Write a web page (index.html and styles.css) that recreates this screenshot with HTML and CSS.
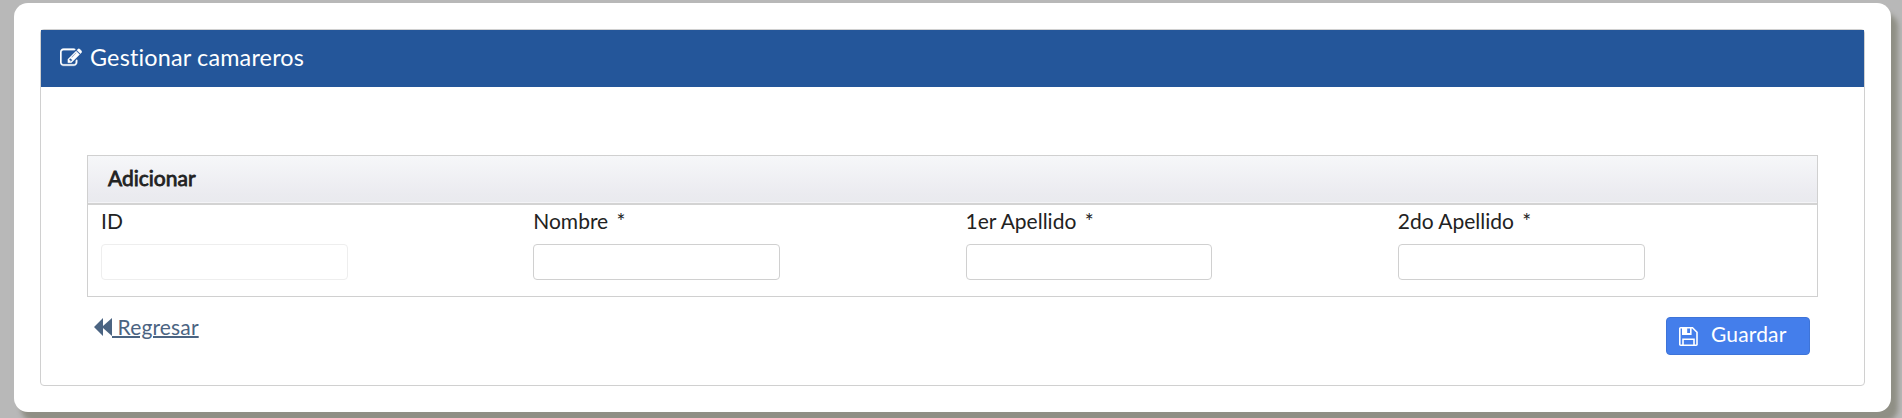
FILE: index.html
```html
<!DOCTYPE html>
<html lang="es">
<head>
<meta charset="utf-8">
<title>Gestionar camareros</title>
<link rel="stylesheet" href="styles.css">
</head>
<body>
<main class="card">
  <section class="panel">
    <h1 class="panel-title">
      <svg class="icon-edit" viewBox="0 0 1792 1792" fill="currentColor"><path d="M888 1184l116-116-152-152-116 116v56h96v96h56zm440-720q-16-16-33 1l-350 350q-17 17-1 33t33-1l350-350q17-17 1-33zm80 594v190q0 119-84.5 203.5t-203.5 84.5h-832q-119 0-203.5-84.5t-84.5-203.5v-832q0-119 84.5-203.5t203.5-84.5h832q63 0 117 25 15 7 18 23 3 17-9 29l-49 49q-14 14-32 8-23-6-45-6h-832q-66 0-113 47t-47 113v832q0 66 47 113t113 47h832q66 0 113-47t47-113v-126q0-13 9-22l64-64q15-15 35-7t20 29zm-96-738l288 288-672 672h-288v-288zm444 132l-92 92-288-288 92-92q28-28 68-28t68 28l152 152q28 28 28 68t-28 68z"/></svg>
      <span class="panel-name">Gestionar camareros</span>
    </h1>
    <div class="panel-body">
      <form class="fieldset">
        <h2 class="fieldset-title">Adicionar</h2>
        <div class="fields">
          <div class="field"><label class="label" for="id">ID</label><input class="input" id="id" disabled></div>
          <div class="field"><label class="label" for="nombre">Nombre <span class="required">*</span></label><input class="input" id="nombre"></div>
          <div class="field"><label class="label" for="ap1">1er Apellido <span class="required">*</span></label><input class="input" id="ap1"></div>
          <div class="field"><label class="label" for="ap2">2do Apellido <span class="required">*</span></label><input class="input" id="ap2"></div>
        </div>
      </form>
      <div class="actions">
        <a class="back" href="#"><svg class="icon-back" viewBox="0 0 18 18" fill="currentColor"><path d="M0 9L9 0V8L18 0V18L9 10V18Z"/></svg><span class="back-text">&nbsp;Regresar</span></a>
        <button class="save" type="button">
          <svg class="icon-save" viewBox="0 0 19 19" fill="none" stroke="currentColor" stroke-width="1.6"><path d="M1.6 .8H13.5L18 5.3V17.4a.8 .8 0 0 1-.8 .8H1.6a.8 .8 0 0 1-.8-.8V1.6a.8 .8 0 0 1 .8-.8zM4 18V12.2h11V18M3.8 1v6.2h8V1"/><path fill="currentColor" stroke="none" d="M4 1h4.2v5H11V1h1v6.5H4z"/></svg>
          <span>Guardar</span>
        </button>
      </div>
    </div>
  </section>
</main>
</body>
</html>
```
FILE: styles.css
```css
* { box-sizing: border-box; }
body {
  margin: 0;
  height: 418px;
  overflow: hidden;
  padding: 3px 11px 0 14px;
  background: #b8b8b8;
  color: #222;
  font-family: Lato, sans-serif;
  font-size: 21px;
  font-variant-ligatures: none;
}
.card {
  height: 409px;
  padding: 26px;
  border-radius: 14px;
  background: #fff;
  box-shadow: 7px 10px 5px #8f8f85;
}
.panel {
  height: 357px;
  border: 1px solid #d0d0d0;
  border-radius: 4px;
}
.panel-title {
  display: flex;
  align-items: center;
  gap: 8px;
  height: 57px;
  margin: 0;
  padding: 0 19px 1px;
  background: #24569a;
  color: #fff;
  font-size: 23.4px;
  font-weight: 400;
  letter-spacing: .17px;
}
.panel-name { margin-bottom: 2px; }
.icon-edit { width: 22px; height: 22px; stroke: currentColor; stroke-width: 25; }
.panel-body { padding: 68px 46px 0; }
.fieldset {
  height: 142px;
  border: 1px solid #d0d0d0;
}
.fieldset-title {
  height: 48px;
  margin: 0;
  padding: 0 20px;
  border-bottom: 1px solid #d3d3d3;
  background: linear-gradient(#f6f7f9, #ebebf0 80%, #e9eaee);
  box-shadow: inset 0 -1px #f4f4f7, 0 1px #d3d3d3;
  font-size: 21px;
  font-weight: 400;
  line-height: 43px;
  -webkit-text-stroke: .8px #222;
}
.fields { display: grid; grid-template-columns: repeat(4, 1fr); }
.field { padding: 4px 13px 0; }
.label { display: block; height: 36px; line-height: 25px; }
.required { margin-left: 3px; }
.input {
  display: block;
  width: 246.8px;
  height: 36px;
  border: 1px solid #d0d0d0;
  border-radius: 4px;
  background: #fff;
}
.input:disabled { border-color: #eee; }
.actions {
  display: flex;
  justify-content: space-between;
  align-items: flex-start;
  padding: 20px 8px 0 7px;
}
.back {
  display: flex;
  align-items: flex-start;
  margin-top: -3px;
  color: #4b6482;
  letter-spacing: .15px;
  line-height: 25px;
  text-decoration: none;
}
.back-text { text-decoration: underline; text-decoration-thickness: 2px; }
.icon-back { width: 18px; height: 18px; margin-top: 4px; }
.save {
  display: flex;
  align-items: center;
  gap: 13px;
  width: 144px;
  height: 38px;
  padding: 0 12px;
  border: 1px solid #3e74d8;
  border-radius: 4px;
  background: #447eeb;
  color: #fff;
  font: 21px/32px Lato, sans-serif;
  letter-spacing: .15px;
}
.save span { margin-bottom: 5px; }
.icon-save { width: 19px; height: 19px; margin-top: 1px; }
```
